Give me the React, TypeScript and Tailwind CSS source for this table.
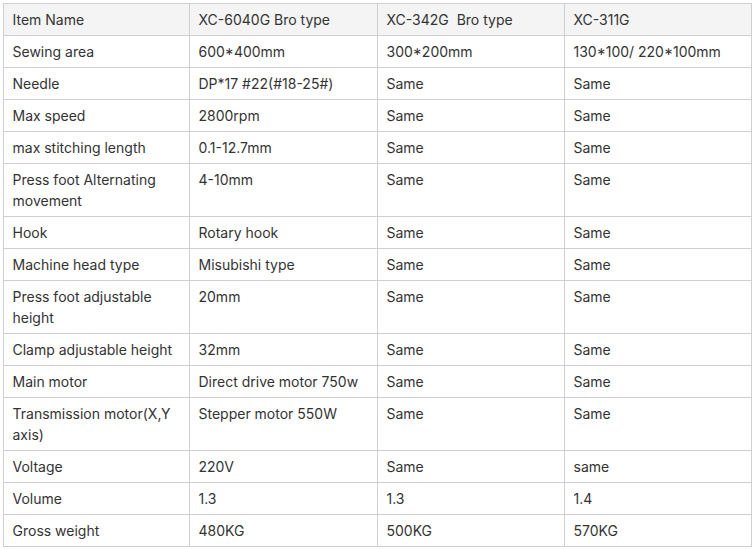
import React from 'react';

interface SpecRow {
  label: string;
  values: [string, string, string];
}

const header: SpecRow = { label: 'Item Name', values: ['XC-6040G Bro type', 'XC-342G\u00a0 Bro type', 'XC-311G'] };

const rows: SpecRow[] = [
  { label: 'Sewing area', values: ['600*400mm', '300*200mm', '130*100/ 220*100mm'] },
  { label: 'Needle', values: ['DP*17 #22(#18-25#)', 'Same', 'Same'] },
  { label: 'Max speed', values: ['2800rpm', 'Same', 'Same'] },
  { label: 'max stitching length', values: ['0.1-12.7mm', 'Same', 'Same'] },
  { label: 'Press foot Alternating movement', values: ['4-10mm', 'Same', 'Same'] },
  { label: 'Hook', values: ['Rotary hook', 'Same', 'Same'] },
  { label: 'Machine head type', values: ['Misubishi type', 'Same', 'Same'] },
  { label: 'Press foot adjustable height', values: ['20mm', 'Same', 'Same'] },
  { label: 'Clamp adjustable height', values: ['32mm', 'Same', 'Same'] },
  { label: 'Main motor', values: ['Direct drive motor 750w', 'Same', 'Same'] },
  { label: 'Transmission motor(X,Y axis)', values: ['Stepper motor 550W', 'Same', 'Same'] },
  { label: 'Voltage', values: ['220V', 'Same', 'same'] },
  { label: 'Volume', values: ['1.3', '1.3', '1.4'] },
  { label: 'Gross weight', values: ['480KG', '500KG', '570KG'] },
];

const cell = 'border border-[#cfcfcf] px-[9px] pt-[5px] pb-[5px] align-top text-left font-normal leading-[21px]';

const App: React.FC = () => {
  return (
    <div className="bg-white pl-[2.5px] pt-[2.5px] text-[14px] text-[#333]" style={{ fontFamily: 'Inter, "Liberation Sans", sans-serif' }}>
      <table className="w-[748px] table-fixed border-collapse">
        <colgroup>
          <col className="w-[186px]" />
          <col className="w-[188px]" />
          <col className="w-[187px]" />
          <col className="w-[187px]" />
        </colgroup>
        <thead>
          <tr className="bg-[#f4f4f4]">
            <th className={cell}>{header.label}</th>
            {header.values.map((v, i) => (
              <th key={i} className={cell}>{v}</th>
            ))}
          </tr>
        </thead>
        <tbody>
          {rows.map((row) => (
            <tr key={row.label}>
              <td className={cell}>{row.label}</td>
              {row.values.map((v, i) => (
                <td key={i} className={cell}>{v}</td>
              ))}
            </tr>
          ))}
        </tbody>
      </table>
    </div>
  );
};

export default App;
